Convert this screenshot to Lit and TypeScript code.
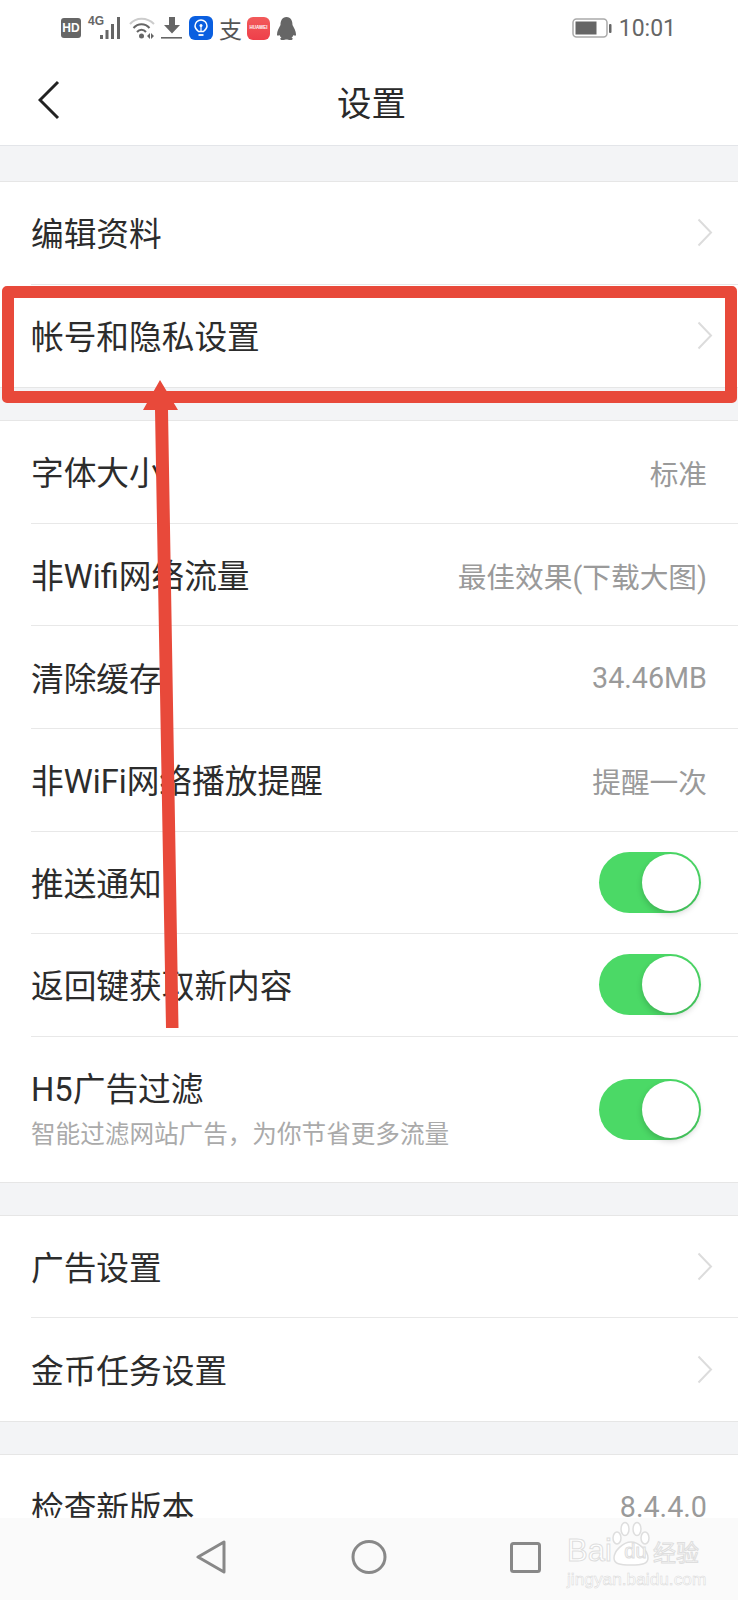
import { LitElement, html, css, svg, nothing } from "lit";
import { customElement } from "lit/decorators.js";

type RowKind = "link" | "value" | "toggle";

interface SettingRow {
  label: string;
  kind: RowKind;
  value?: string;
  hint?: string;
}

const GROUPS: SettingRow[][] = [
  [
    { label: "编辑资料", kind: "link" },
    { label: "帐号和隐私设置", kind: "link" },
  ],
  [
    { label: "字体大小", kind: "value", value: "标准" },
    { label: "非Wifi网络流量", kind: "value", value: "最佳效果(下载大图)" },
    { label: "清除缓存", kind: "value", value: "34.46MB" },
    { label: "非WiFi网络播放提醒", kind: "value", value: "提醒一次" },
    { label: "推送通知", kind: "toggle" },
    { label: "返回键获取新内容", kind: "toggle" },
    { label: "H5广告过滤", kind: "toggle", hint: "智能过滤网站广告，为你节省更多流量" },
  ],
  [
    { label: "广告设置", kind: "link" },
    { label: "金币任务设置", kind: "link" },
  ],
  [{ label: "检查新版本", kind: "value", value: "8.4.4.0" }],
];

/* status bar icons, left to right */
const signalIcon = svg`<svg class="sb" width="36" height="24" viewBox="0 0 36 24">
  <rect x="13" y="19" width="3" height="4" fill="#666"/>
  <rect x="18.500" y="14" width="3" height="9" fill="#666"/>
  <rect x="24" y="8" width="3" height="15" fill="#666"/>
  <rect x="30" y="1" width="3" height="22" fill="#666"/>
</svg>`;

const wifiIcon = svg`<svg class="sb" width="26" height="24" viewBox="0 0 26 24" fill="none">
  <path d="M1 8C7 1 18 1 25 8" stroke="#ccc" stroke-width="2"/>
  <path d="M4.500 12C9 7 16 7 20.500 12" stroke="#666" stroke-width="2"/>
  <path d="M8 16C10.500 13 14.500 13 17 16" stroke="#666" stroke-width="2"/>
  <circle cx="12.500" cy="20" r="2.500" fill="#666"/>
  <path d="M18 20l3-3v6zM22 17l3 3-3 3z" fill="#666"/>
</svg>`;

const downloadIcon = svg`<svg class="sb" width="22" height="24" viewBox="0 0 22 24">
  <path d="M8 1h6v8h5L11 17.500 3 9h5z" fill="#666"/>
  <rect x="0" y="21" width="21" height="1.600" fill="#666"/>
</svg>`;

const bulbIcon = svg`<svg width="24" height="24" viewBox="0 0 24 24" fill="none">
  <rect width="24" height="24" rx="6" fill="#0a5fe0"/>
  <path d="M9.500 15.500C7 13.500 6 11.800 6 10a6 6 0 0 1 12 0c0 1.800-1 3.500-3.500 5.500z" stroke="#fff" stroke-width="1.500"/>
  <path d="M9.500 19h5" stroke="#fff" stroke-width="1.800"/>
  <circle cx="12" cy="9.500" r="1.500" fill="#fff"/>
  <path d="M12 10v5" stroke="#fff" stroke-width="1.200"/>
</svg>`;

const penguinIcon = svg`<svg class="sb" width="21" height="23" viewBox="0 0 21 23">
  <path d="M10.500 0C6 0 4.500 4 4.500 8 3 11 1 14 1 17.500c0 1.500 1 1.500 2.500.5.300 1 1 2 2 2.500C4 21 3.500 23 6.500 23c2 0 3-.6 4-.6s2 .6 4 .6c3 0 2.500-2 1-2.500 1-.5 1.700-1.500 2-2.500 1.500 1 2.500 1 2.500-.5 0-3.500-2-6.500-3.500-9.500 0-4-1.500-8-6-8z" fill="#666"/>
</svg>`;

const batteryIcon = svg`<svg class="sb" width="40" height="20" viewBox="0 0 40 20" fill="none">
  <rect x="1" y="1" width="34" height="18" rx="3.500" stroke="#aaa" stroke-width="1.500"/>
  <rect x="3.500" y="3.500" width="21" height="13" fill="#666"/>
  <rect x="37" y="6" width="2.500" height="9" rx="1" fill="#666"/>
</svg>`;

const chevron = svg`<svg class="chevron" width="16" height="29" viewBox="0 0 16 29" fill="none">
  <path d="M1.500 1.500L14 14.500 1.500 27.500" stroke="#dcdcdc" stroke-width="2"/>
</svg>`;

@customElement("settings-row")
class SettingsRow extends LitElement {
  static properties = { row: { attribute: false } };
  row!: SettingRow;

  static styles = css`
    :host {
      display: block;
      padding-left: 31px;
    }
    :host(:not(:last-child)) .inner {
      border-bottom: 1px solid #e8e8e8;
    }
    .inner {
      display: flex;
      align-items: center;
      justify-content: space-between;
      height: 102.600px;
      box-sizing: border-box;
      padding-right: 31px;
    }
    .inner.tall {
      height: 145px;
    }
    .text {
      padding-top: 5px;
    }
    .tall .text {
      padding-top: 0;
    }
    .label {
      font-size: 32.700px;
      line-height: 44px;
      color: #2c2c2c;
    }
    .hint {
      font-size: 24.600px;
      line-height: 30px;
      margin-top: 8px;
      color: #aaa;
    }
    .value {
      padding-top: 2px;
      font-size: 28.700px;
      color: #9a9a9a;
    }
    .chevron {
      margin-right: -6px;
    }
    .toggle {
      position: relative;
      width: 102px;
      height: 61px;
      margin-right: 6px;
      border-radius: 31px;
      background: #4bd966;
    }
    .knob {
      position: absolute;
      top: 2px;
      right: 2px;
      width: 57px;
      height: 57px;
      border-radius: 50%;
      background: #fff;
      box-shadow: 0 3px 6px rgba(0, 0, 0, 0.18);
    }
  `;

  render() {
    const { label, kind, value, hint } = this.row;
    return html`
      <div class="inner ${hint ? "tall" : ""}">
        <div class="text">
          <div class="label">${label}</div>
          ${hint ? html`<div class="hint">${hint}</div>` : nothing}
        </div>
        ${kind === "link" ? chevron : nothing}
        ${kind === "value" ? html`<span class="value">${value}</span>` : nothing}
        ${kind === "toggle" ? html`<div class="toggle"><div class="knob"></div></div>` : nothing}
      </div>
    `;
  }
}

@customElement("app-root")
class AppRoot extends LitElement {
  static styles = css`
    :host {
      display: block;
      position: relative;
      width: 738px;
      height: 1600px;
      overflow: hidden;
      background: #f3f4f6;
      font-family: Roboto, "Noto Sans CJK SC", sans-serif;
    }
    .top {
      background: #fff;
      height: 146px;
      border-bottom: 1px solid #e3e5e9;
      box-sizing: border-box;
    }
    .status {
      display: flex;
      align-items: center;
      height: 56px;
      padding: 0 62px 0 61px;
    }
    .status .sb,
    .status svg {
      flex: none;
    }
    .status-left {
      display: flex;
      align-items: center;
      gap: 6px;
    }
    .status-right {
      display: flex;
      align-items: center;
      gap: 7px;
      margin-left: auto;
    }
    .hd {
      width: 20px;
      height: 20px;
      border-radius: 3px;
      background: #666;
      color: #fff;
      font: 700 12px/20px "Liberation Sans", sans-serif;
      text-align: center;
    }
    .net {
      position: relative;
      width: 36px;
      height: 24px;
    }
    .net span {
      position: absolute;
      left: 1px;
      top: -2px;
      font: 700 12px/14px "Liberation Sans Narrow", "Liberation Sans", sans-serif;
      color: #666;
    }
    .alipay {
      width: 23px;
      text-align: center;
      font: 400 23px/24px "Noto Sans CJK SC", sans-serif;
      color: #555;
    }
    .huawei {
      display: flex;
      align-items: center;
      justify-content: center;
      width: 23px;
      height: 23px;
      border-radius: 6px;
      margin-left: -1px;
      background: linear-gradient(#f25a5a, #ee3f4a);
      color: #fff;
      font: 700 4.500px/1 "Liberation Sans", sans-serif;
      overflow: hidden;
    }
    .time {
      font-size: 23px;
      color: #666;
    }
    .title-bar {
      position: relative;
      display: flex;
      align-items: center;
      justify-content: center;
      height: 89px;
      padding-left: 5px;
    }
    .back {
      position: absolute;
      left: 38px;
      top: 24px;
    }
    h1 {
      margin: 0;
      font-size: 34.500px;
      font-weight: 400;
      color: #2a2a2a;
    }
    .group {
      background: #fff;
      margin-top: 32px;
      border-top: 1px solid #e6e6e6;
      border-bottom: 1px solid #e6e6e6;
    }
    .group.first {
      margin-top: 35px;
    }
    .nav {
      position: absolute;
      left: 0;
      right: 0;
      bottom: 0;
      height: 82px;
      background: #fafafa;
    }
    .nav svg {
      position: absolute;
      top: 22px;
    }
    .nav .home {
      left: 351px;
    }
    .nav .back-key {
      left: 196px;
    }
    .nav .recent {
      left: 510px;
      top: 24px;
    }
    .nav .paw {
      left: 611px;
      top: 3px;
    }
    .mark {
      position: absolute;
      left: 567px;
      top: 18px;
      width: 132px;
      color: #fff;
      -webkit-text-stroke: 1px #dedede;
      font-family: "Liberation Sans", sans-serif;
      white-space: nowrap;
    }
    .mark .big {
      display: flex;
      align-items: center;
      height: 30px;
      font: 31px/30px "Liberation Sans Narrow", "Liberation Sans", sans-serif;
    }
    .mark .du {
      width: 40px;
      margin-left: 6px;
      text-align: center;
      font-size: 20px;
    }
    .mark .small {
      display: block;
      -webkit-text-stroke: 0.500px #d8d8d8;
      font-size: 17.300px;
      line-height: 18px;
      margin-top: 4px;
    }
    .mark .cn {
      font-family: "Noto Sans CJK SC", sans-serif;
      font-size: 23px;
    }
    .callout {
      position: absolute;
      left: 2px;
      top: 286px;
      width: 735px;
      height: 117px;
      box-sizing: border-box;
      border: 12px solid #e8493a;
      border-radius: 5px;
    }
    .arrow {
      position: absolute;
      left: 0;
      top: 0;
      pointer-events: none;
    }
  `;

  render() {
    return html`
      <div class="top">
        <div class="status">
          <div class="status-left">
            <div class="hd">HD</div>
            <div class="net"><span>4G</span>${signalIcon}</div>
            ${wifiIcon} ${downloadIcon} ${bulbIcon}
            <div class="alipay">支</div>
            <div class="huawei">HUAWEI</div>
            ${penguinIcon}
          </div>
          <div class="status-right">
            ${batteryIcon}
            <span class="time">10:01</span>
          </div>
        </div>
        <div class="title-bar">
          <svg class="back" width="22" height="40" viewBox="0 0 22 40" fill="none">
            <path d="M20 2L2 20l18 18" stroke="#222" stroke-width="3"/>
          </svg>
          <h1>设置</h1>
        </div>
      </div>

      ${GROUPS.map(
        (rows, i) => html`
          <div class="group ${i === 0 ? "first" : ""}">
            ${rows.map((row) => html`<settings-row .row=${row}></settings-row>`)}
          </div>
        `
      )}

      <div class="nav">
        <svg class="back-key" width="30" height="34" viewBox="0 0 30 34" fill="none">
          <path d="M28 2v30L2 17z" stroke="#888" stroke-width="3" stroke-linejoin="round"/>
        </svg>
        <svg class="home" width="36" height="34" viewBox="0 0 36 34" fill="none">
          <ellipse cx="18" cy="17" rx="16" ry="15.500" stroke="#888" stroke-width="3"/>
        </svg>
        <svg class="recent" width="31" height="31" viewBox="0 0 31 31" fill="none">
          <rect x="1.500" y="1.500" width="28" height="28" rx="2" stroke="#888" stroke-width="3"/>
        </svg>
        <svg class="paw" width="40" height="46" viewBox="0 0 40 46" fill="#fff" stroke="#dedede" stroke-width="1.500">
          <ellipse cx="6" cy="17" rx="4" ry="6"/>
          <ellipse cx="14" cy="8" rx="4" ry="6.500"/>
          <ellipse cx="26" cy="8" rx="4" ry="6.500"/>
          <ellipse cx="34" cy="17" rx="4" ry="6"/>
          <path d="M20 21C12 21 3 30 3 37c0 6 6 7 17 7s17-1 17-7c0-7-9-16-17-16z"/>
        </svg>
        <div class="mark">
          <span class="big">Bai<span class="du">du</span><span class="cn">经验</span></span>
          <span class="small">jingyan.baidu.com</span>
        </div>
      </div>

      <div class="callout"></div>
      <svg class="arrow" width="738" height="1600" viewBox="0 0 738 1600">
        <path d="M160 380L178 410H168L178.500 1028H166L155 410H143z" fill="#e8493a"/>
      </svg>
    `;
  }
}
